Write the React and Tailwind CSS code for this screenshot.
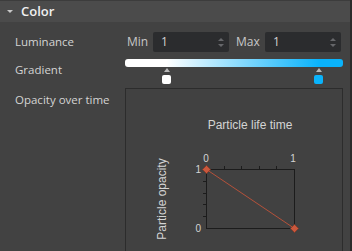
const Spinner = () => (
  <div className="flex flex-col items-center gap-[3px] mr-[5px]">
    <div className="w-0 h-0 border-l-[3px] border-r-[3px] border-b-[3px] border-l-transparent border-r-transparent border-b-[#66676a]" />
    <div className="w-0 h-0 border-l-[3px] border-r-[3px] border-t-[3px] border-l-transparent border-r-transparent border-t-[#66676a]" />
  </div>
);

const NumberBox = ({ value }) => (
  <div className="w-[76px] h-[20px] bg-[#2b2c2e] rounded-[2px] flex items-center justify-between pl-[8px]">
    <span className="text-[12px] text-[#d4d4d4]">{value}</span>
    <Spinner />
  </div>
);

const Marker = ({ left, color }) => (
  <div className="absolute top-[9px] flex flex-col items-center" style={{ left }}>
    <div className="w-0 h-0 border-l-[3px] border-r-[3px] border-b-[4px] border-l-transparent border-r-transparent border-b-[#b8b8b8]" />
    <div className={`w-[9px] h-[9px] rounded-[2px] mt-[3px] ${color}`} />
  </div>
);

const Chart = () => {
  const topTicks = [97.6, 115.2, 132.8, 150.4];
  const leftTicks = [91.8, 103.6, 115.4, 127.2];
  return (
    <svg width="216" height="162" className="block">
      <text x="124" y="40" textAnchor="middle" fontSize="12" fill="#d4d4d4" fontFamily="Liberation Sans, Arial, sans-serif">
        Particle life time
      </text>
      <text
        x="37"
        y="110"
        textAnchor="middle"
        fontSize="12"
        fill="#d4d4d4"
        fontFamily="Liberation Sans, Arial, sans-serif"
        transform="rotate(-90 37 110)"
        dominantBaseline="middle"
      >
        Particle opacity
      </text>
      <text x="80" y="73" textAnchor="middle" fontSize="10" fill="#d4d4d4" fontFamily="Liberation Sans, Arial, sans-serif">0</text>
      <text x="167" y="73" textAnchor="middle" fontSize="10" fill="#d4d4d4" fontFamily="Liberation Sans, Arial, sans-serif">1</text>
      <text x="75" y="84" textAnchor="end" fontSize="10" fill="#d4d4d4" fontFamily="Liberation Sans, Arial, sans-serif">1</text>
      <text x="75" y="143" textAnchor="end" fontSize="10" fill="#d4d4d4" fontFamily="Liberation Sans, Arial, sans-serif">0</text>
      <rect x="80.5" y="80.5" width="88" height="59" fill="none" stroke="#1c1c1c" strokeWidth="1" />
      {topTicks.map((x) => (
        <line key={x} x1={Math.round(x) + 0.5} y1="77" x2={Math.round(x) + 0.5} y2="80" stroke="#1c1c1c" />
      ))}
      {leftTicks.map((y) => (
        <line key={y} x1="77" y1={Math.round(y) + 0.5} x2="80" y2={Math.round(y) + 0.5} stroke="#1c1c1c" />
      ))}
      <line x1="80.5" y1="80.5" x2="168.5" y2="139.5" stroke="#b4513a" strokeWidth="1" />
      <polygon points="80.5,76.5 84.5,80.5 80.5,84.5 76.5,80.5" fill="#c9583d" stroke="#8a3a27" strokeWidth="0.8" />
      <polygon points="168.5,135.5 172.5,139.5 168.5,143.5 164.5,139.5" fill="#c9583d" stroke="#8a3a27" strokeWidth="0.8" />
    </svg>
  );
};

const App = () => {
  return (
    <div
      className="w-[352px] h-[251px] overflow-hidden bg-[#424242] border-r-2 border-[#2b2b2b] flex flex-col"
      style={{ fontFamily: '"Open Sans", "Noto Sans", sans-serif' }}
    >
      <div className="h-[22px] shrink-0 bg-[#4b4b4b] border-t border-[#3c3c3c] flex items-center pl-[7px]">
        <div className="w-0 h-0 border-l-[3px] border-r-[3px] border-t-[3px] border-l-transparent border-r-transparent border-t-[#c8c8c8]" />
        <span className="ml-[8px] text-[13px] font-semibold text-[#f0f0f0]">Color</span>
      </div>

      <div className="flex mt-[10px] h-[20px] items-center">
        <div className="w-[125px] pl-[15px] text-[11.5px] text-[#d4d4d4]">Luminance</div>
        <div className="flex items-center">
          <span className="ml-[2px] w-[26px] text-[12px] text-[#c8c8c8]">Min</span>
          <NumberBox value="1" />
          <span className="ml-[7px] w-[29px] text-[12px] text-[#c8c8c8]">Max</span>
          <NumberBox value="1" />
        </div>
      </div>

      <div className="flex mt-[7px]">
        <div className="w-[125px] pl-[15px] pt-[2px] text-[11.5px] text-[#d4d4d4]">Gradient</div>
        <div className="relative w-[218px] h-[29px]">
          <div className="h-[8px] rounded-[3px] bg-[linear-gradient(to_right,#ffffff_19%,#0ab3fb_89%)]" />
          <Marker left="37px" color="bg-white" />
          <Marker left="189px" color="bg-[#0ab3fb]" />
        </div>
      </div>

      <div className="flex flex-1">
        <div className="w-[125px] pl-[15px] pt-[3px] text-[11.5px] text-[#d4d4d4]">Opacity over time</div>
        <div className="w-[218px] border border-[#2c2c2c] bg-[#414141]">
          <Chart />
        </div>
      </div>
    </div>
  );
};

export default App;
